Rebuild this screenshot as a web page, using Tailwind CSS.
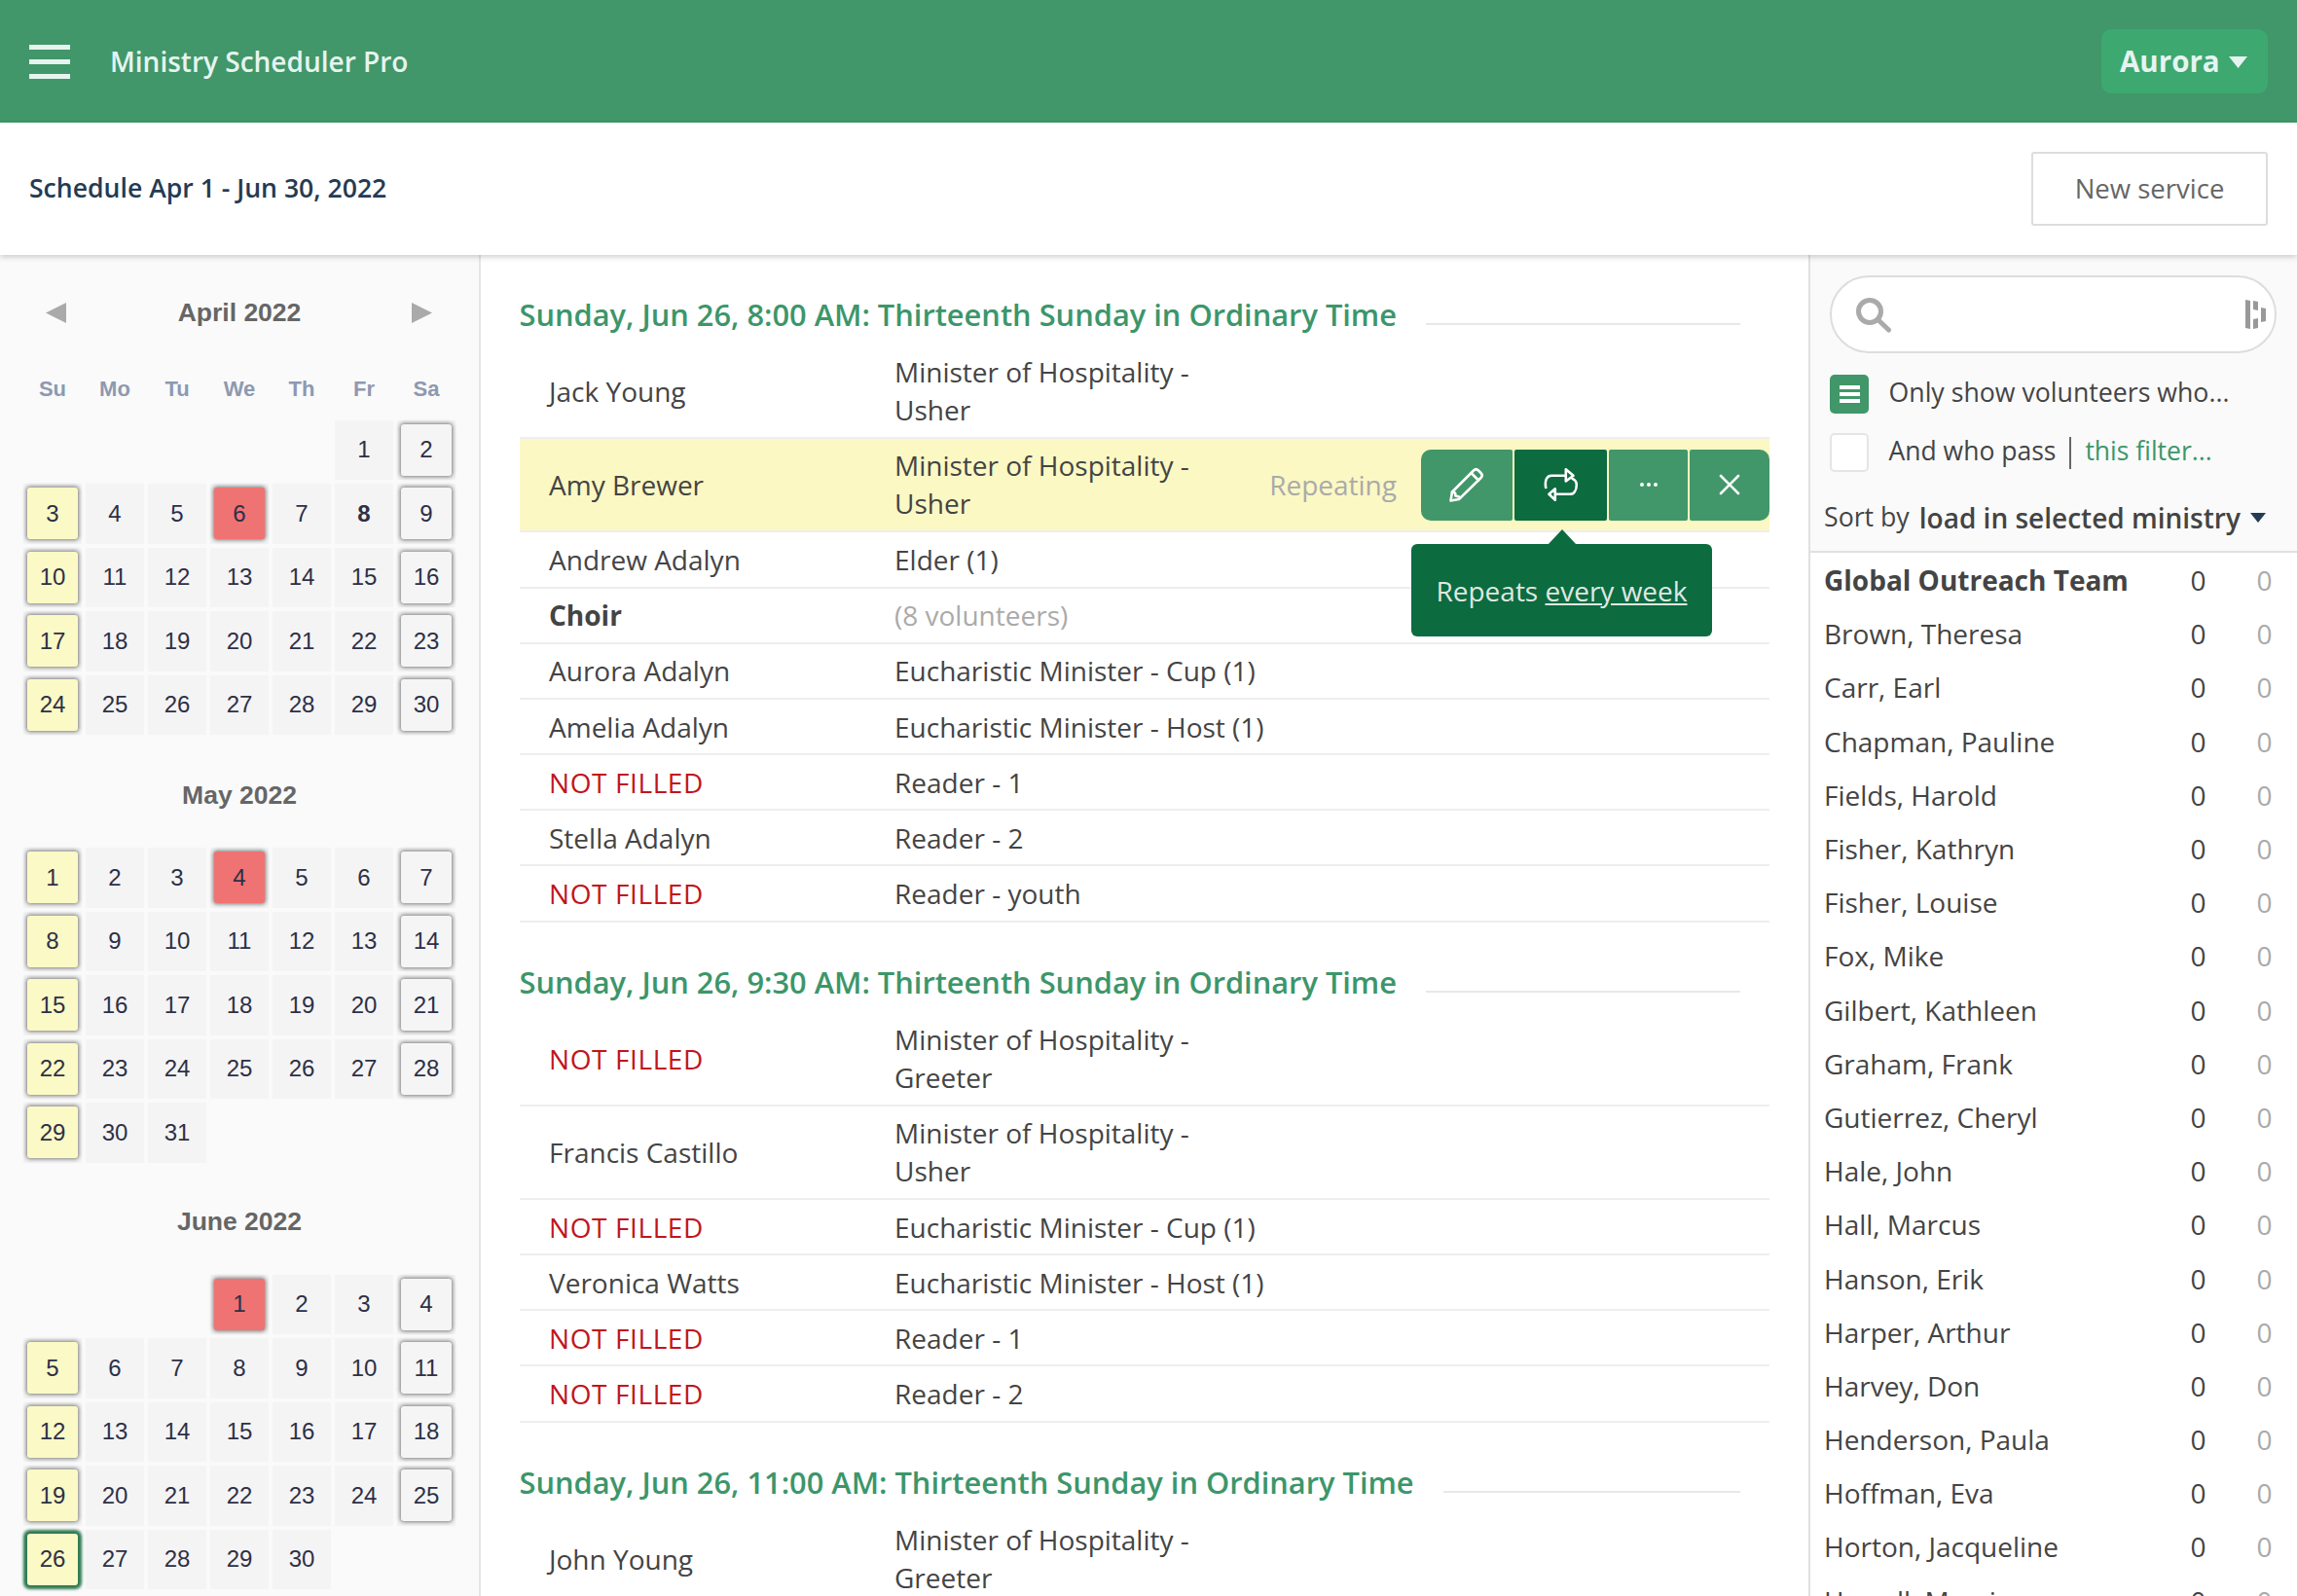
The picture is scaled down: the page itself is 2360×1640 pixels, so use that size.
<!DOCTYPE html>
<html>
<head>
<meta charset="UTF-8">
<title>Ministry Scheduler Pro</title>
<script src="https://cdn.jsdelivr.net/npm/@tailwindcss/browser@4"></script>
</head>
<body class="font-['Open_Sans',sans-serif] text-[#444] bg-white">
<div class="w-[2360px] h-[1640px] overflow-hidden flex flex-col">

  <!-- top bar -->
  <header class="h-[126px] shrink-0 bg-[#419769] flex items-center pl-[30px] pr-[30px]">
    <div class="w-[42px] flex flex-col gap-[10px]">
      <div class="h-[5px] bg-[#e6f4f0]"></div>
      <div class="h-[5px] bg-[#e6f4f0]"></div>
      <div class="h-[5px] bg-[#e6f4f0]"></div>
    </div>
    <div class="ml-[41px] text-[28px] font-semibold text-[#e6f4f0]">Ministry Scheduler Pro</div>
    <button class="ml-auto w-[171px] h-[66px] rounded-[10px] bg-[#3da870] text-[#e6f4f0] text-[29.5px] font-bold flex items-center pl-[19px]">
      Aurora
      <svg class="ml-[9px] mt-[1px]" width="19" height="12" viewBox="0 0 19 12"><path d="M0 0h19L9.500 12z" fill="#e6f4f0"/></svg>
    </button>
  </header>

  <!-- schedule bar -->
  <div class="relative z-10 h-[136px] shrink-0 bg-white flex items-center pl-[30px] pr-[30px] shadow-[0_2px_6px_rgba(0,0,0,0.2)]">
    <div class="text-[26.6px] font-semibold text-[#243b53]">Schedule Apr 1 - Jun 30, 2022</div>
    <button class="ml-auto w-[243px] h-[76px] -mt-[1px] border-2 border-[#ddd] rounded-[3px] text-[27.5px] text-[#666] bg-white pt-[1px]">New service</button>
  </div>

  <div class="flex flex-1 min-h-0">
    <!-- calendars -->
    <aside class="w-[494px] shrink-0 bg-[#fafafa] border-r-2 border-[#e5e5e5] font-['Liberation_Sans',sans-serif] pl-[24px]">
      <div class="relative h-[58px] w-[444px] flex items-center justify-center text-[26.5px] font-bold text-[#666] mt-[30.5px]">
        <svg class="absolute left-[23px] top-[18px]" width="21" height="21" viewBox="0 0 21 21"><path d="M21 0v21L0 10.500z" fill="#aaa"/></svg>
        April 2022
        <svg class="absolute left-[399px] top-[18px]" width="21" height="21" viewBox="0 0 21 21"><path d="M0 0v21l21-10.500z" fill="#aaa"/></svg>
      </div>
      <div class="grid grid-cols-[repeat(7,60px)] gap-x-1 mt-[32px] h-[49px] text-[22px] font-bold text-[#8e99b0] text-center">
        <div>Su</div><div>Mo</div><div>Tu</div><div>We</div><div>Th</div><div>Fr</div><div>Sa</div>
      </div>
      <div id="april" class="grid grid-cols-[repeat(7,60px)] auto-rows-[61.5px] gap-1"></div>

      <div class="h-[40px] w-[444px] flex items-center justify-center text-[26.5px] font-bold text-[#666] mt-[42.5px]">May 2022</div>
      <div id="may" class="grid grid-cols-[repeat(7,60px)] auto-rows-[61.5px] gap-1 mt-[33.5px]"></div>

      <div class="h-[40px] w-[444px] flex items-center justify-center text-[26.5px] font-bold text-[#666] mt-[41px]">June 2022</div>
      <div id="june" class="grid grid-cols-[repeat(7,60px)] auto-rows-[61.5px] gap-1 mt-[34px]"></div>
    </aside>

    <!-- services -->
    <main class="flex-1 min-w-0 pl-[39.5px] pr-[40px] pt-[33px] text-[28px]">
      <div class="flex items-center h-[60px] text-[30.8px] font-semibold text-[#3c966a] whitespace-nowrap">
        <span class="-mt-[3px]">Sunday, Jun 26, 8:00 AM: Thirteenth Sunday in Ordinary Time</span>
        <div class="ml-[30px] w-[323px] h-[2px] bg-[#e8e8e8] mt-[16px]"></div>
      </div>
      <div class="flex items-center h-[96px] border-b-2 border-[#eee]"><div class="w-[385.5px] pl-[30.5px]">Jack Young</div><div class="leading-[39.5px]">Minister of Hospitality -<br>Usher</div></div>

      <div class="relative flex items-center h-[98px] -mt-[2px] border-y-2 border-[#eee] bg-[#fbf8c3]">
        <div class="w-[385.5px] pl-[30.5px]">Amy Brewer</div>
        <div class="leading-[39.5px]">Minister of Hospitality -<br>Usher</div>
        <div class="ml-auto mr-[25px] -mt-[1px] text-[#aaa]">Repeating</div>
        <div class="flex gap-[2px] h-[73px]">
          <div class="w-[94px] bg-[#419769] rounded-l-[10px] rounded-r-[2px] flex items-center justify-center">
            <svg width="38" height="38" viewBox="0 0 38 38" fill="none" stroke="#fff" stroke-width="2.600" stroke-linejoin="round" stroke-linecap="round"><path d="M2.500 35.500l1.500-9L26 4.500c1.600-1.600 3.400-1.600 5 0l2.500 2.500c1.600 1.600 1.600 3.400 0 5L11 34z"/><path d="M23.500 7l7.500 7.500"/><path d="M4 26.500l3 1 .5 3 3.500 1"/></svg>
          </div>
          <div class="w-[95px] bg-[#0c6b3f] rounded-[2px] flex items-center justify-center">
            <svg width="36" height="36" viewBox="0 0 36 36" fill="none" stroke="#fff" stroke-width="2.600" stroke-linejoin="round" stroke-linecap="round"><path d="M2.200 21C1 14 3 8.800 8 8.800h14"/><path d="M22.800 2.200l7.700 6.600-7.700 5.700z"/><path d="M29.500 11.800c2.500 1.200 4.300 3.200 4.300 6.200 0 6-2.800 9.800-6.800 9.800H12.800"/><path d="M11.800 22.200l-6.300 5.600 6.300 6z"/></svg>
          </div>
          <div class="w-[81px] bg-[#419769] rounded-[2px] flex items-center justify-center gap-[3px]">
            <span class="w-[4px] h-[4px] rounded-full bg-white"></span><span class="w-[4px] h-[4px] rounded-full bg-white"></span><span class="w-[4px] h-[4px] rounded-full bg-white"></span>
          </div>
          <div class="w-[82px] bg-[#419769] rounded-r-[10px] rounded-l-[2px] flex items-center justify-center">
            <svg width="22" height="22" viewBox="0 0 22 22" stroke="#fff" stroke-width="2.600" stroke-linecap="round"><path d="M2 2l18 18M20 2L2 20"/></svg>
          </div>
        </div>
        <!-- tooltip -->
        <div class="absolute z-20 left-[916.5px] top-[108px] w-[309px] h-[95px] rounded-[6px] bg-[#0c6b3f] text-[#dfe8e3] flex items-center justify-center">
          <svg class="absolute left-[140px] -top-[15px]" width="30" height="16" viewBox="0 0 30 16"><path d="M0 16L15 0l15 16z" fill="#0c6b3f"/></svg>
          <span>Repeats <span class="underline">every week</span></span>
        </div>
      </div>

      <div class="flex items-center h-[57.5px] border-b-2 border-[#eee]"><div class="w-[385.5px] pl-[30.5px]">Andrew Adalyn</div><div>Elder (1)</div></div>
      <div class="flex items-center h-[57px] border-b-2 border-[#eee]"><div class="w-[385.5px] pl-[30.5px] font-bold">Choir</div><div class="text-[#aaa]">(8 volunteers)</div></div>
      <div class="flex items-center h-[57.5px] border-b-2 border-[#eee]"><div class="w-[385.5px] pl-[30.5px]">Aurora Adalyn</div><div>Eucharistic Minister - Cup (1)</div></div>
      <div class="flex items-center h-[57px] border-b-2 border-[#eee]"><div class="w-[385.5px] pl-[30.5px]">Amelia Adalyn</div><div>Eucharistic Minister - Host (1)</div></div>
      <div class="flex items-center h-[57px] border-b-2 border-[#eee]"><div class="w-[385.5px] pl-[30.5px] text-[#c2151b] tracking-[0.6px]">NOT FILLED</div><div>Reader - 1</div></div>
      <div class="flex items-center h-[57px] border-b-2 border-[#eee]"><div class="w-[385.5px] pl-[30.5px]">Stella Adalyn</div><div>Reader - 2</div></div>
      <div class="flex items-center h-[58px] border-b-2 border-[#eee]"><div class="w-[385.5px] pl-[30.5px] text-[#c2151b] tracking-[0.6px]">NOT FILLED</div><div>Reader - youth</div></div>

      <div class="flex items-center h-[60px] mt-[33px] text-[30.8px] font-semibold text-[#3c966a] whitespace-nowrap">
        <span class="-mt-[3px]">Sunday, Jun 26, 9:30 AM: Thirteenth Sunday in Ordinary Time</span>
        <div class="ml-[30px] w-[323px] h-[2px] bg-[#e8e8e8] mt-[16px]"></div>
      </div>
      <div class="flex items-center h-[96px] border-b-2 border-[#eee]"><div class="w-[385.5px] pl-[30.5px] text-[#c2151b] tracking-[0.6px]">NOT FILLED</div><div class="leading-[39.5px]">Minister of Hospitality -<br>Greeter</div></div>
      <div class="flex items-center h-[96px] border-b-2 border-[#eee]"><div class="w-[385.5px] pl-[30.5px]">Francis Castillo</div><div class="leading-[39.5px]">Minister of Hospitality -<br>Usher</div></div>
      <div class="flex items-center h-[57px] border-b-2 border-[#eee]"><div class="w-[385.5px] pl-[30.5px] text-[#c2151b] tracking-[0.6px]">NOT FILLED</div><div>Eucharistic Minister - Cup (1)</div></div>
      <div class="flex items-center h-[57px] border-b-2 border-[#eee]"><div class="w-[385.5px] pl-[30.5px]">Veronica Watts</div><div>Eucharistic Minister - Host (1)</div></div>
      <div class="flex items-center h-[57px] border-b-2 border-[#eee]"><div class="w-[385.5px] pl-[30.5px] text-[#c2151b] tracking-[0.6px]">NOT FILLED</div><div>Reader - 1</div></div>
      <div class="flex items-center h-[58px] border-b-2 border-[#eee]"><div class="w-[385.5px] pl-[30.5px] text-[#c2151b] tracking-[0.6px]">NOT FILLED</div><div>Reader - 2</div></div>

      <div class="flex items-center h-[60px] mt-[33px] text-[30.8px] font-semibold text-[#3c966a] whitespace-nowrap">
        <span class="-mt-[3px]">Sunday, Jun 26, 11:00 AM: Thirteenth Sunday in Ordinary Time</span>
        <div class="ml-[30px] w-[305px] h-[2px] bg-[#e8e8e8] mt-[16px]"></div>
      </div>
      <div class="flex items-center h-[96px] border-b-2 border-[#eee]"><div class="w-[385.5px] pl-[30.5px]">John Young</div><div class="leading-[39.5px]">Minister of Hospitality -<br>Greeter</div></div>
    </main>

    <!-- volunteers -->
    <aside class="w-[502px] shrink-0 border-l-2 border-[#e0e0e0] text-[28px] overflow-hidden">
      <div class="h-[306px] bg-[#fafafa] border-b-2 border-[#e0e0e0] pl-[20px] pt-[21px]">
        <div class="relative w-[459px] h-[80px] rounded-full border-2 border-[#ddd] bg-white">
          <svg class="absolute left-[24px] top-[20px]" width="38" height="38" viewBox="0 0 38 38" fill="none" stroke="#aaa" stroke-width="5"><circle cx="15" cy="15" r="11.500"/><path d="M23.500 23.500l11 10.500" stroke-linecap="round"/></svg>
          <svg class="absolute left-[425px] top-[23px]" width="22" height="31" viewBox="0 0 22 31" fill="#999"><path d="M0 0l5 1v29l-5-1zM8 1l5 1v9l-5-1zM8 20l5-1v10l-5 1zM16 8l5 1v13l-5 1z"/></svg>
        </div>
        <div class="flex items-center h-[40px] mt-[22px] text-[26.7px]">
          <div class="w-[40px] h-[40px] rounded-[5px] bg-[#419769] flex flex-col items-center justify-center gap-[3px]">
            <div class="w-[21px] h-[4px] bg-white"></div><div class="w-[21px] h-[4px] bg-white"></div><div class="w-[21px] h-[4px] bg-white"></div>
          </div>
          <span class="ml-[20.5px] -mt-[3px]">Only show volunteers who...</span>
        </div>
        <div class="flex items-center h-[40px] mt-[20px] text-[26.5px]">
          <div class="w-[40px] h-[40px] rounded-[5px] bg-white border-2 border-[#e5e5e5]"></div>
          <span class="ml-[20.5px] -mt-[2px]">And who pass</span>
          <div class="w-[2px] h-[33px] bg-[#666] ml-[14px]"></div>
          <span class="ml-[14px] -mt-[2px] text-[#3c966a]">this filter...</span>
        </div>
        <div class="flex items-center h-[40px] mt-[26.5px] -ml-[6px]">
          <span class="text-[26.7px]">Sort by</span>
          <span class="ml-[10px] font-semibold">load in selected ministry</span>
          <svg class="ml-[10px]" width="16" height="10" viewBox="0 0 16 10"><path d="M0 0h16L8 10z" fill="#243b53"/></svg>
        </div>
      </div>
      <div id="people" class="pl-[14px] pr-[25.5px] pt-[0.5px]"></div>
    </aside>
  </div>
</div>

<script>
  const cellClass = 'bg-[#f4f4f4] flex items-center justify-center text-[24px] text-[#2d3047]';
  const tileClass = {
    sun: 'w-[52px] h-[53px] rounded-[3px] bg-[#fbf9c5] shadow-[0_0_4px_1px_#777] flex items-center justify-center',
    sat: 'w-[52px] h-[53px] rounded-[3px] bg-[#f5f5f5] shadow-[0_0_4px_1px_#777] flex items-center justify-center',
    red: 'w-[52px] h-[53px] rounded-[3px] bg-[#ef7373] shadow-[0_0_4px_1px_#777] flex items-center justify-center',
    picked: 'w-[52px] h-[53px] rounded-[3px] bg-[#fbf9c5] shadow-[0_0_3px_4px_#2f7a52] flex items-center justify-center'
  };

  function drawMonth(id, offset, days, redDay, pickedDay, boldDay) {
    const box = document.getElementById(id);
    let html = '';
    for (let i = 0; i < offset; i++) html += '<div></div>';
    for (let d = 1; d <= days; d++) {
      const col = (offset + d - 1) % 7;
      let kind = null;
      if (d === pickedDay) kind = 'picked';
      else if (d === redDay) kind = 'red';
      else if (col === 0) kind = 'sun';
      else if (col === 6) kind = 'sat';
      const label = d === boldDay ? '<b>' + d + '</b>' : d;
      html += '<div class="' + cellClass + '">' + (kind ? '<div class="' + tileClass[kind] + '">' + label + '</div>' : label) + '</div>';
    }
    box.innerHTML = html;
  }
  drawMonth('april', 5, 30, 6, 0, 8);
  drawMonth('may', 0, 31, 4, 0, 0);
  drawMonth('june', 3, 30, 1, 26, 0);

  const people = ['Global Outreach Team', 'Brown, Theresa', 'Carr, Earl', 'Chapman, Pauline', 'Fields, Harold', 'Fisher, Kathryn', 'Fisher, Louise', 'Fox, Mike', 'Gilbert, Kathleen', 'Graham, Frank', 'Gutierrez, Cheryl', 'Hale, John', 'Hall, Marcus', 'Hanson, Erik', 'Harper, Arthur', 'Harvey, Don', 'Henderson, Paula', 'Hoffman, Eva', 'Horton, Jacqueline', 'Howell, Marvin'];
  document.getElementById('people').innerHTML = people.map((name, i) =>
    '<div class="flex items-center h-[55.2px]">' +
    '<span class="' + (i === 0 ? 'font-bold' : '') + '">' + name + '</span>' +
    '<span class="ml-auto">0</span><span class="w-[68px] text-right text-[#aaa]">0</span></div>'
  ).join('');
</script>
</body>
</html>
